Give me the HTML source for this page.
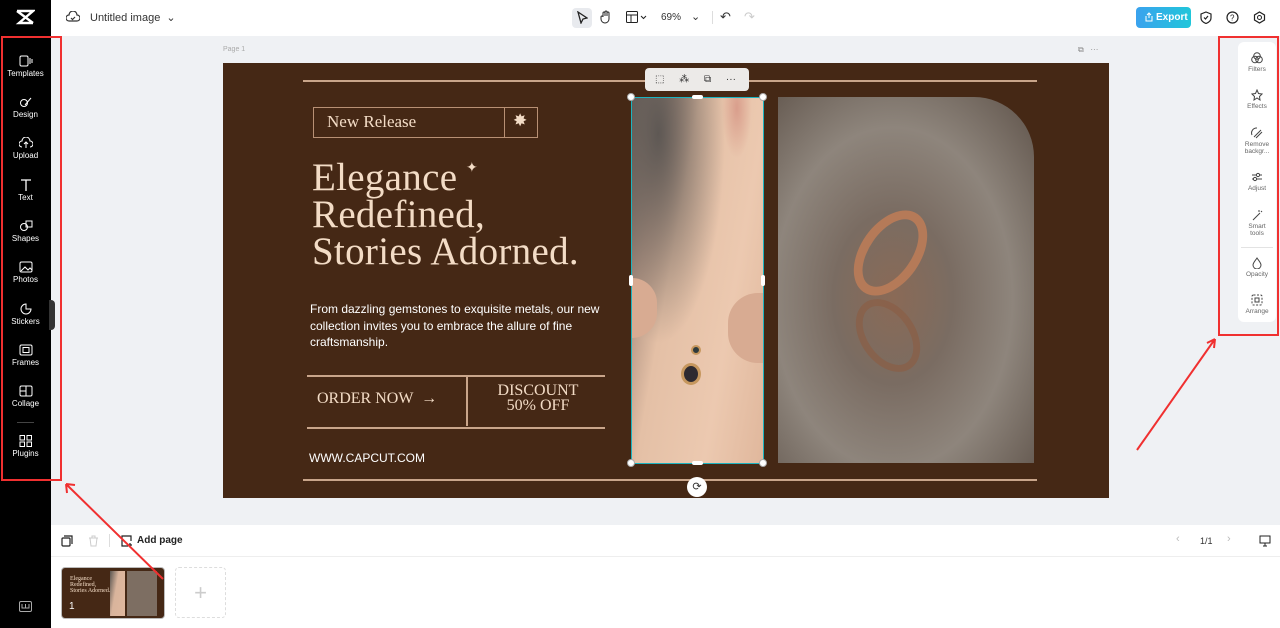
<!DOCTYPE html>
<html><head><meta charset="utf-8"><style>
*{margin:0;padding:0;box-sizing:border-box}
body{width:1280px;height:628px;overflow:hidden;background:#eff1f4;font-family:"Liberation Sans",sans-serif;position:relative}
.abs{position:absolute}
.side{left:0;top:0;width:51px;height:628px;background:#000}
.si{position:absolute;left:0;width:51px;text-align:center;color:#fff;font-size:8px}
.si svg{display:block;margin:0 auto 2px}
.top{left:51px;top:0;width:1229px;height:36px;background:#fff}
.rp{left:1238px;top:42px;width:38px;height:280px;background:#fff;border-radius:6px}
.ri{position:absolute;left:0;width:38px;text-align:center;color:#666;font-size:6.5px;line-height:7px}
.ri svg{display:block;margin:0 auto 2px}
.serif{font-family:"Liberation Serif",serif;color:#f3dcc6}
.line{position:absolute;background:#c9a58a;height:2px}
</style></head><body>
<div class="abs side">
 <svg class="abs" style="left:15px;top:9px" width="20" height="16" viewBox="0 0 20 16"><path d="M2 2h16L4 14h14M2 2l8 6M18 14l-8-6" stroke="#fff" stroke-width="2.4" fill="none"/></svg>
 <div class="si" style="top:55px"><svg width="14" height="12"><rect x="1" y="1" width="8" height="10" rx="1.5" stroke="#fff" fill="none"/><path d="M11 3v6M13 4v4" stroke="#fff"/></svg>Templates</div>
 <div class="si" style="top:96px"><svg width="14" height="12"><circle cx="5" cy="7" r="3.5" stroke="#fff" fill="none"/><path d="M6 9l6-7" stroke="#fff"/></svg>Design</div>
 <div class="si" style="top:137px"><svg width="14" height="12"><path d="M3 10a3 3 0 010-6 4 4 0 018 0 3 3 0 010 6M7 11V5M5 7l2-2 2 2" stroke="#fff" fill="none"/></svg>Upload</div>
 <div class="si" style="top:179px"><svg width="14" height="12"><path d="M2 1h10M7 1v11" stroke="#fff" stroke-width="1.3"/></svg>Text</div>
 <div class="si" style="top:220px"><svg width="14" height="12"><circle cx="5" cy="7" r="3.5" stroke="#fff" fill="none"/><rect x="7" y="1" width="6" height="6" stroke="#fff" fill="none"/></svg>Shapes</div>
 <div class="si" style="top:261px"><svg width="14" height="12"><rect x="1" y="1" width="12" height="10" rx="1.5" stroke="#fff" fill="none"/><path d="M2 10l4-4 3 3 2-2 2 2" stroke="#fff" fill="none"/></svg>Photos</div>
 <div class="si" style="top:303px"><svg width="14" height="12"><path d="M7 1a5 5 0 105 5h-5z" stroke="#fff" fill="none"/></svg>Stickers</div>
 <div class="si" style="top:344px"><svg width="14" height="12"><rect x="1" y="1" width="12" height="10" rx="1.5" stroke="#fff" fill="none"/><rect x="4" y="3.5" width="6" height="5" stroke="#fff" fill="none"/></svg>Frames</div>
 <div class="si" style="top:385px"><svg width="14" height="12"><rect x="1" y="1" width="12" height="10" rx="1.5" stroke="#fff" fill="none"/><path d="M7 1v10M1 6h6" stroke="#fff"/></svg>Collage</div>
 <div class="abs" style="left:17px;top:422px;width:17px;height:1px;background:#444"></div>
 <div class="si" style="top:435px"><svg width="14" height="12"><rect x="1" y="0.5" width="4.5" height="4.5" stroke="#fff" fill="none"/><rect x="8" y="0.5" width="4.5" height="4.5" stroke="#fff" fill="none"/><rect x="1" y="7" width="4.5" height="4.5" stroke="#fff" fill="none"/><rect x="8" y="7" width="4.5" height="4.5" stroke="#fff" fill="none"/></svg>Plugins</div>
 <svg class="abs" style="left:19px;top:601px" width="13" height="11"><rect x="0.5" y="0.5" width="12" height="10" rx="1.5" stroke="#aaa" fill="none"/><path d="M3 3v4h7V3M6.5 3v4" stroke="#aaa" fill="none"/></svg>
 <div class="abs" style="left:49px;top:300px;width:6px;height:30px;background:#333;border-radius:0 4px 4px 0"></div>
</div>
<div class="abs top">
 <svg class="abs" style="left:15px;top:11px" width="14" height="12"><path d="M3 10a3 3 0 010-6 4 4 0 018 0 3 3 0 010 6z M5 7l1.5 1.5L9 6" stroke="#333" fill="none" stroke-width="1.2"/></svg>
 <div class="abs" style="left:39px;top:11px;font-size:11px;color:#333">Untitled image &nbsp;⌄</div>
 <div class="abs" style="left:521px;top:8px;width:20px;height:20px;background:#e8eaee;border-radius:4px"></div>
 <svg class="abs" style="left:525px;top:11px" width="12" height="13"><path d="M2 1l9 6-4 1-2 4z" stroke="#222" fill="none" stroke-width="1.3"/></svg>
 <svg class="abs" style="left:549px;top:10px" width="12" height="14"><path d="M3 7V3a1 1 0 012 0v3V2a1 1 0 012 0v4V3a1 1 0 012 0v6a4 4 0 01-8 0V7a1 1 0 012 0" stroke="#222" fill="none"/></svg>
 <svg class="abs" style="left:575px;top:11px" width="22" height="12"><rect x="0.5" y="0.5" width="11" height="11" rx="1" stroke="#222" fill="none"/><path d="M0.5 4h11M5 4v7.5M15 5l2.5 2.5L20 5" stroke="#222" fill="none"/></svg>
 <div class="abs" style="left:610px;top:12px;font-size:10px;color:#333">69%</div>
 <div class="abs" style="left:640px;top:10px;font-size:11px;color:#333">⌄</div>
 <div class="abs" style="left:661px;top:11px;width:1px;height:13px;background:#ddd"></div>
 <div class="abs" style="left:669px;top:9px;font-size:13px;color:#333">↶</div>
 <div class="abs" style="left:693px;top:9px;font-size:13px;color:#ccc">↷</div>
 <div class="abs" style="left:1085px;top:7px;width:55px;height:21px;border-radius:4px;background:linear-gradient(90deg,#3aa2ee,#20c6da);color:#fff;font-size:10px;font-weight:bold;line-height:21px;padding-left:20px">Export</div>
 <svg class="abs" style="left:1093px;top:12px" width="10" height="10"><path d="M2 4v5h6V4M5 1v5M3 3l2-2 2 2" stroke="#fff" fill="none"/></svg>
 <svg class="abs" style="left:1149px;top:11px" width="12" height="13"><path d="M6 1l5 2v4c0 3-2.5 4.5-5 5.5C3.5 11.5 1 10 1 7V3z M4 6.5l1.5 1.5L8 5" stroke="#222" fill="none" stroke-width="1.2"/></svg>
 <svg class="abs" style="left:1175px;top:11px" width="13" height="13"><circle cx="6.5" cy="6.5" r="5.5" stroke="#222" fill="none" stroke-width="1.2"/><text x="4" y="9.5" font-size="8" fill="#222" font-family="Liberation Sans">?</text></svg>
 <svg class="abs" style="left:1202px;top:11px" width="13" height="13"><path d="M6.5 1l5 3v5l-5 3-5-3V4z" stroke="#222" fill="none" stroke-width="1.2"/><circle cx="6.5" cy="6.5" r="2" stroke="#222" fill="none"/></svg>
</div>
<div class="abs" style="left:223px;top:46px;font-size:7px;color:#aaa">Page 1</div>
<div class="abs" style="left:1078px;top:45px;font-size:8px;color:#888">⧉ &nbsp;&nbsp;···</div>
<!-- canvas -->
<div class="abs" style="left:223px;top:63px;width:886px;height:435px;background:#452815">
 <div class="line" style="left:80px;top:17px;width:734px;height:1.5px"></div>
 <div class="line" style="left:80px;top:416px;width:734px;height:1.5px"></div>
 <div class="abs" style="left:90px;top:44px;width:225px;height:31px;border:1px solid #b89074"></div>
 <div class="abs" style="left:281px;top:44px;width:1px;height:31px;background:#b89074"></div>
 <div class="abs serif" style="left:104px;top:49px;font-size:17px">New Release</div>
 <div class="abs" style="left:290px;top:48px;font-size:17px;color:#f3dcc6">✸</div>
 <div class="abs serif" style="left:89px;top:96px;font-size:39px;line-height:37px;letter-spacing:0.3px">Elegance<br>Redefined,<br>Stories Adorned.</div>
 <div class="abs" style="left:243px;top:96px;font-size:14px;color:#f3dcc6">✦</div>
 <div class="abs" style="left:87px;top:238px;font-size:12px;line-height:16.5px;color:#fff;width:290px">From dazzling gemstones to exquisite metals, our new collection invites you to embrace the allure of fine craftsmanship.</div>
 <div class="line" style="left:84px;top:312px;width:298px;height:1.5px"></div>
 <div class="line" style="left:84px;top:364px;width:298px;height:1.5px"></div>
 <div class="abs" style="left:243px;top:313px;width:1.5px;height:50px;background:#c9a58a"></div>
 <div class="abs serif" style="left:94px;top:327px;font-size:16px">ORDER NOW &nbsp;→</div>
 <div class="abs serif" style="left:250px;top:320px;width:130px;text-align:center;font-size:16px;line-height:15px">DISCOUNT<br>50% OFF</div>
 <div class="abs" style="left:86px;top:388px;font-size:12px;color:#fff">WWW.CAPCUT.COM</div>
 <div class="abs" style="left:409px;top:34px;width:131px;height:366px;background:radial-gradient(ellipse at 80% 3%,#d99e8c 0%,transparent 10%),radial-gradient(ellipse at 20% 10%,#5e5854 0%,transparent 45%),linear-gradient(100deg,#6a625c 0%,#b89a88 20%,#e4c0a6 35%,#ecc9b0 70%,#e0b79c 100%)"></div>
 <div class="abs" style="left:409px;top:215px;width:25px;height:60px;background:#d8ab92;border-radius:0 30px 30px 0"></div>
 <div class="abs" style="left:505px;top:230px;width:35px;height:70px;background:#d8ab92;border-radius:30px 0 0 30px"></div>
 <div class="abs" style="left:458px;top:300px;width:20px;height:22px;border-radius:50%;background:#2e2a30;border:3px solid #c6975e"></div>
 <div class="abs" style="left:468px;top:282px;width:10px;height:10px;border-radius:50%;background:#2e3a3c;border:2px solid #c6975e"></div>
 <div class="abs" style="left:555px;top:34px;width:256px;height:366px;border-radius:0 60px 0 0;background:radial-gradient(ellipse at 45% 55%,#8a6a56 0%,#7a6c62 30%,#8e857c 60%,#5e5249 100%)"></div>
 <div class="abs" style="left:620px;top:160px;width:95px;height:60px;border:9px solid #b57a58;border-radius:50%;transform:rotate(-55deg)"></div>
 <div class="abs" style="left:625px;top:245px;width:80px;height:55px;border:7px solid #8a5e46;border-radius:50%;transform:rotate(55deg);opacity:0.7"></div>
 <div class="abs" style="left:408px;top:34px;width:133px;height:367px;border:1.5px solid #1cb4c0"></div>
 <div class="abs" style="left:422px;top:5px;width:104px;height:23px;background:#eceae8;border-radius:4px;font-size:10px;color:#333;line-height:23px;padding-left:10px;word-spacing:12px">⬚ ⁂ ⧉ ···</div>
 <div class="abs" style="left:464px;top:414px;width:20px;height:20px;border-radius:50%;background:#fff;font-size:11px;text-align:center;line-height:20px;color:#333">⟳</div>
</div>
<div class="abs" style="left:627px;top:93px;width:8px;height:8px;border-radius:50%;background:#fff;border:1px solid #aaa"></div>
<div class="abs" style="left:759px;top:93px;width:8px;height:8px;border-radius:50%;background:#fff;border:1px solid #aaa"></div>
<div class="abs" style="left:627px;top:459px;width:8px;height:8px;border-radius:50%;background:#fff;border:1px solid #aaa"></div>
<div class="abs" style="left:759px;top:459px;width:8px;height:8px;border-radius:50%;background:#fff;border:1px solid #aaa"></div>
<div class="abs" style="left:692px;top:95px;width:11px;height:4px;border-radius:2px;background:#fff"></div>
<div class="abs" style="left:692px;top:461px;width:11px;height:4px;border-radius:2px;background:#fff"></div>
<div class="abs" style="left:629px;top:275px;width:4px;height:11px;border-radius:2px;background:#fff"></div>
<div class="abs" style="left:761px;top:275px;width:4px;height:11px;border-radius:2px;background:#fff"></div>
<!-- right panel -->
<div class="abs rp">
 <div class="ri" style="top:10px"><svg width="12" height="12"><circle cx="4" cy="7.5" r="3.3" stroke="#444" fill="none"/><circle cx="8" cy="7.5" r="3.3" stroke="#444" fill="none"/><circle cx="6" cy="4" r="3.3" stroke="#444" fill="none"/></svg>Filters</div>
 <div class="ri" style="top:47px"><svg width="12" height="12"><path d="M6 1l1.5 3.5L11 5 8.5 7.5 9 11 6 9 3 11l.5-3.5L1 5l3.5-.5z" stroke="#444" fill="none"/></svg>Effects</div>
 <div class="ri" style="top:85px"><svg width="12" height="12"><path d="M3 10l7-7M5 11l6-6M1 8a5 5 0 015-7" stroke="#444" fill="none"/></svg>Remove<br>backgr...</div>
 <div class="ri" style="top:129px"><svg width="12" height="12"><path d="M1 4h10M1 8h10" stroke="#444"/><circle cx="7" cy="4" r="1.6" fill="#fff" stroke="#444"/><circle cx="4" cy="8" r="1.6" fill="#fff" stroke="#444"/></svg>Adjust</div>
 <div class="ri" style="top:167px"><svg width="12" height="12"><path d="M2 11l7-7M8 1v2M10 2l1 1M11 5" stroke="#444" fill="none"/></svg>Smart<br>tools</div>
 <div class="abs" style="left:3px;top:205px;width:32px;height:1px;background:#e3e3e3"></div>
 <div class="ri" style="top:215px"><svg width="12" height="12"><path d="M6 1C4 4 2 6 2 8a4 4 0 008 0c0-2-2-4-4-7z" stroke="#444" fill="none"/></svg>Opacity</div>
 <div class="ri" style="top:252px"><svg width="12" height="12"><rect x="1" y="1" width="10" height="10" rx="1.5" stroke="#444" fill="none" stroke-dasharray="2 1.5"/><rect x="4" y="4" width="4" height="4" stroke="#444" fill="none"/></svg>Arrange</div>
</div>
<!-- bottom -->
<div class="abs" style="left:51px;top:525px;width:1229px;height:103px;background:#fff"></div>
<div class="abs" style="left:51px;top:556px;width:1229px;height:1px;background:#eee"></div>
<svg class="abs" style="left:61px;top:535px" width="12" height="12"><rect x="1" y="3" width="8" height="8" rx="1" stroke="#222" fill="none" stroke-width="1.2"/><path d="M3 1h8v8" stroke="#222" fill="none" stroke-width="1.2"/></svg>
<svg class="abs" style="left:88px;top:535px" width="11" height="12"><path d="M1 3h9M4 3V1h3v2M2 3l1 8h5l1-8" stroke="#ccc" fill="none"/></svg>
<div class="abs" style="left:109px;top:534px;width:1px;height:13px;background:#ddd"></div>
<svg class="abs" style="left:121px;top:535px" width="13" height="12"><path d="M10 6V1H1v10h6M9 8v4M7 10h4" stroke="#222" fill="none" stroke-width="1.2"/></svg>
<div class="abs" style="left:137px;top:535px;font-size:10px;color:#222;font-weight:bold">Add page</div>
<div class="abs" style="left:1176px;top:533px;font-size:11px;color:#bbb">‹</div>
<div class="abs" style="left:1200px;top:536px;font-size:9px;color:#333">1/1</div>
<div class="abs" style="left:1227px;top:533px;font-size:11px;color:#bbb">›</div>
<svg class="abs" style="left:1259px;top:535px" width="12" height="12"><rect x="1" y="1" width="10" height="7" stroke="#222" fill="none"/><path d="M6 8v3M4 11h4" stroke="#222"/></svg>
<div class="abs" style="left:61px;top:567px;width:104px;height:52px;border-radius:4px;background:#452815;border:1.5px solid #bbb;overflow:hidden">
 <div class="abs serif" style="left:8px;top:8px;font-size:6px;line-height:6px">Elegance<br>Redefined,<br>Stories Adorned.</div>
 <div class="abs" style="left:48px;top:3px;width:15px;height:45px;background:linear-gradient(100deg,#5a5550,#d9b49c 40%,#e0b89e)"></div>
 <div class="abs" style="left:65px;top:3px;width:30px;height:45px;background:#7d6e62"></div>
 <div class="abs" style="left:7px;top:33px;color:#fff;font-size:10px">1</div>
</div>
<div class="abs" style="left:175px;top:567px;width:51px;height:51px;border:1px dashed #ddd;border-radius:4px;text-align:center;line-height:49px;font-size:22px;color:#ccc">+</div>
<!-- red annotations -->
<div class="abs" style="left:1px;top:36px;width:61px;height:445px;border:2.5px solid #f03030"></div>
<div class="abs" style="left:1218px;top:36px;width:61px;height:300px;border:2.5px solid #f03030"></div>
<svg class="abs" style="left:0;top:0" width="1280" height="628"><path d="M163 579L66 484M66 484l1 9M66 484l9 1M1137 450L1215 339M1215 339l-8 4M1215 339l-1 9" stroke="#f03030" stroke-width="2" fill="none"/></svg>
</body></html>
